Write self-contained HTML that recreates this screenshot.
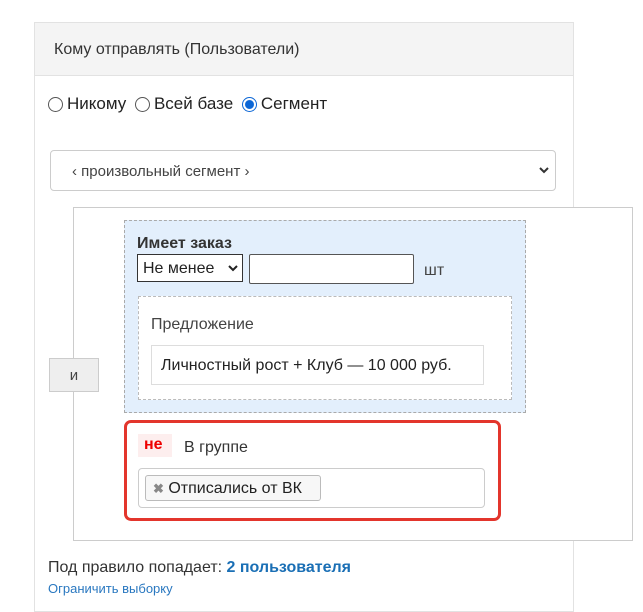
<!DOCTYPE html>
<html><head><meta charset="utf-8"><style>
*{box-sizing:border-box;margin:0;padding:0}
body{width:643px;height:603px;background:#fff;font-family:"Liberation Sans",sans-serif;color:#222;position:relative;overflow:hidden}
.a{position:absolute}
</style></head><body>
<div class="a" style="left:34px;top:22px;width:540px;height:590px;border:1px solid #e2e2e2"></div>
<div class="a" style="left:35px;top:23px;width:538px;height:53px;background:#f4f4f4;border-bottom:1px solid #e2e2e2"></div>
<div class="a" style="left:54px;top:41px;font-size:16px;color:#333">Кому отправлять (Пользователи)</div>
<div class="a" style="left:48px;top:94px;font-size:17px;display:flex;align-items:center;gap:4px">
<span style="width:15px;height:15px;border:1px solid #555;border-radius:50%;display:inline-block"></span>Никому&nbsp;
<span style="width:15px;height:15px;border:1px solid #555;border-radius:50%;display:inline-block"></span>Всей базе&nbsp;
<span style="width:15px;height:15px;border:1px solid #0b66d6;border-radius:50%;display:inline-block;background:radial-gradient(#0b66d6 45%,#fff 52%)"></span>Сегмент</div>
<div class="a" style="left:50px;top:150px;width:506px;height:41px;border:1px solid #ccc;border-radius:4px"></div>
<div class="a" style="left:72px;top:163px;font-size:15px;color:#444">‹ произвольный сегмент ›</div>
<svg class="a" style="left:538px;top:165px" width="12" height="10"><path d="M2 3l4 4 4-4" stroke="#333" stroke-width="2" fill="none"/></svg>
<div class="a" style="left:73px;top:207px;width:560px;height:334px;border:1px solid #ccc;background:#fff"></div>
<div class="a" style="left:49px;top:358px;width:50px;height:34px;background:#eee;border:1px solid #ccc;font-size:15px;text-align:center;line-height:34px;color:#444">и</div>
<div class="a" style="left:124px;top:220px;width:402px;height:193px;background:#e3effc;border:1px dashed #aaa"></div>
<div class="a" style="left:137px;top:235px;font-size:16px;font-weight:bold;color:#333">Имеет заказ</div>
<div class="a" style="left:137px;top:254px;width:106px;height:28px;border:1px solid #333;background:#fff;font-size:16px;padding:5px 5px">Не менее</div>
<svg class="a" style="left:227px;top:264px" width="12" height="9"><path d="M2 2l4 4 4-4" stroke="#222" stroke-width="2" fill="none"/></svg>
<div class="a" style="left:249px;top:254px;width:165px;height:30px;border:1px solid #555;background:#fff;border-radius:2px"></div>
<div class="a" style="left:424px;top:262px;font-size:16px;color:#444">шт</div>
<div class="a" style="left:138px;top:296px;width:374px;height:104px;border:1px dashed #bbb;background:#fff"></div>
<div class="a" style="left:151px;top:316px;font-size:16px;color:#444">Предложение</div>
<div class="a" style="left:151px;top:345px;width:333px;height:40px;border:1px solid #ddd;font-size:16px;padding:11px 9px;white-space:nowrap">Личностный рост + Клуб — 10 000 руб.</div>
<div class="a" style="left:124px;top:420px;width:377px;height:101px;border:3px solid #e3352c;border-radius:7px"></div>
<div class="a" style="left:138px;top:434px;width:34px;height:23px;background:#fdeeee;color:#e00;font-weight:bold;font-size:16px;padding:2px 0 0 6px">не</div>
<div class="a" style="left:184px;top:439px;font-size:16px;color:#333">В группе</div>
<div class="a" style="left:138px;top:468px;width:347px;height:40px;border:1px solid #ccc;border-radius:4px"></div>
<div class="a" style="left:145px;top:475px;width:176px;height:26px;border:1px solid #bbb;border-radius:3px;background:#f7f7f7;font-size:16px;padding:4px 0 0 7px;white-space:nowrap"><span style="color:#888;font-weight:bold;font-size:13px">✖</span> Отписались от ВК</div>
<div class="a" style="left:48px;top:559px;font-size:16px;color:#333">Под правило попадает: <b style="color:#1a6fb5">2 пользователя</b></div>
<div class="a" style="left:48px;top:581px;font-size:13px;color:#2a78c0">Ограничить выборку</div>
</body></html>
